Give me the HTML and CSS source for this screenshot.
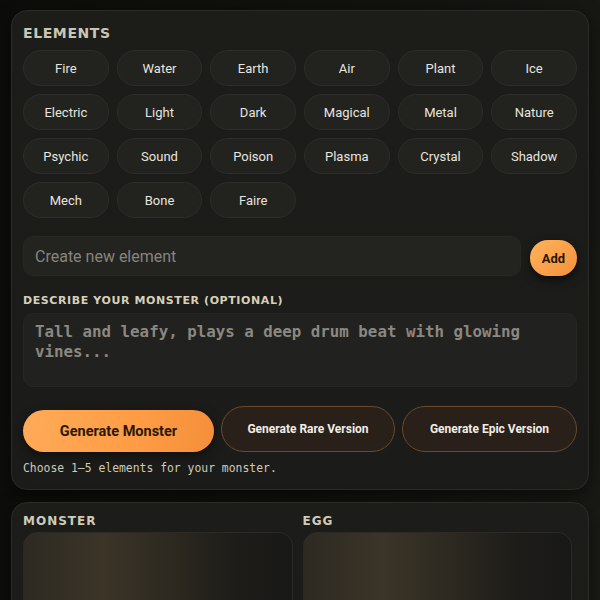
FILE: index.html
```html
<!DOCTYPE html>
<html lang="en">
<head>
    <meta charset="utf-8">
    <title>Monster Maker</title>
    <link rel="stylesheet" href="styles.css">
</head>
<body>
    <section class="card builder">
        <h2 class="title">ELEMENTS</h2>
        <div class="chips">
            <button class="chip">Fire</button>
            <button class="chip">Water</button>
            <button class="chip">Earth</button>
            <button class="chip">Air</button>
            <button class="chip">Plant</button>
            <button class="chip">Ice</button>
            <button class="chip">Electric</button>
            <button class="chip">Light</button>
            <button class="chip">Dark</button>
            <button class="chip">Magical</button>
            <button class="chip">Metal</button>
            <button class="chip">Nature</button>
            <button class="chip">Psychic</button>
            <button class="chip">Sound</button>
            <button class="chip">Poison</button>
            <button class="chip">Plasma</button>
            <button class="chip">Crystal</button>
            <button class="chip">Shadow</button>
            <button class="chip">Mech</button>
            <button class="chip">Bone</button>
            <button class="chip">Faire</button>
        </div>

        <div class="new-element">
            <input class="field" placeholder="Create new element">
            <button class="btn-add">Add</button>
        </div>

        <label class="label">DESCRIBE YOUR MONSTER (OPTIONAL)</label>
        <textarea class="desc" placeholder="Tall and leafy, plays a deep drum beat with glowing vines..."></textarea>

        <div class="actions">
            <button class="btn-main">Generate Monster</button>
            <button class="btn-alt">Generate Rare Version</button>
            <button class="btn-alt">Generate Epic Version</button>
        </div>
        <p class="hint">Choose 1–5 elements for your monster.</p>
    </section>

    <section class="card results">
        <div class="result">
            <h3 class="label-sm">MONSTER</h3>
            <div class="frame"></div>
        </div>
        <div class="result">
            <h3 class="label-sm">EGG</h3>
            <div class="frame"></div>
        </div>
    </section>
</body>
</html>
```

FILE: styles.css
```css
body {
    margin: 0;
    padding: 10px 11px;
    min-height: 600px;
    box-sizing: border-box;
    background: linear-gradient(100deg, #0c0c0b 0%, #121210 60%, #1a1a16 100%);
    font-family: Roboto, "Liberation Sans", sans-serif;
    color: #e6e3dc;
}

.card {
    background: linear-gradient(180deg, #1c1c19 0%, #1b1b19 100%);
    border: 1px solid #2b2b27;
    border-radius: 16px;
    box-shadow: 0 6px 18px rgba(0, 0, 0, 0.5);
}

.builder {
    padding: 12px 11px 14px 11px;
    margin-bottom: 12px;
}

.title {
    margin: 2px 0 9px 0;
    font-family: "DejaVu Sans", sans-serif;
    font-size: 14px;
    font-weight: bold;
    letter-spacing: 0.6px;
    color: #cbc6b3;
}

.chips {
    display: grid;
    grid-template-columns: repeat(6, 1fr);
    gap: 8px;
}

.chip {
    height: 36px;
    border-radius: 18px;
    border: 1px solid #2c2c28;
    background: #22221f;
    color: #e7e5df;
    font-family: Roboto, sans-serif;
    font-size: 13px;
}

.new-element {
    display: flex;
    align-items: center;
    gap: 9px;
    margin-top: 18px;
}

.field {
    flex: 1;
    height: 40px;
    box-sizing: border-box;
    padding: 0 11px;
    border-radius: 10px;
    border: 1px solid #262623;
    background: #232320;
    color: #e6e3dc;
    font-family: Roboto, sans-serif;
    font-size: 16px;
    outline: none;
}
.field::placeholder {
    color: #87857e;
}

.btn-add {
    width: 47px;
    height: 36px;
    margin-top: 4px;
    border: none;
    border-radius: 18px;
    background: linear-gradient(135deg, #ffb35c, #f5913a);
    color: #2a1606;
    font-family: Roboto, sans-serif;
    font-size: 13px;
    font-weight: bold;
    box-shadow: 0 4px 10px rgba(0, 0, 0, 0.55);
}

.label {
    display: block;
    margin: 18px 0 6px 0;
    font-family: "DejaVu Sans", sans-serif;
    font-size: 11px;
    font-weight: bold;
    letter-spacing: 0.6px;
    color: #d6d0bb;
}

.desc {
    display: block;
    width: 100%;
    height: 74px;
    box-sizing: border-box;
    padding: 8px 11px;
    border-radius: 10px;
    border: 1px solid #262623;
    background: #21211f;
    color: #e6e3dc;
    font-family: "DejaVu Sans Mono", monospace;
    font-size: 15.8px;
    font-weight: bold;
    line-height: 20px;
    resize: none;
    outline: none;
}
.desc::placeholder {
    color: #8b8881;
}

.actions {
    display: grid;
    grid-template-columns: 191fr 174fr 175fr;
    align-items: end;
    gap: 7px;
    margin-top: 19px;
}

.btn-main {
    height: 42px;
    border: none;
    border-radius: 21px;
    background: linear-gradient(100deg, #ffab58 0%, #ff9c45 60%, #f48e3a 100%);
    color: #2b1708;
    font-family: Roboto, sans-serif;
    font-size: 14.5px;
    font-weight: bold;
    box-shadow: 0 4px 12px rgba(0, 0, 0, 0.45);
}

.btn-alt {
    height: 46px;
    border: 1px solid #6a4a2c;
    border-radius: 23px;
    background: #29201a;
    color: #f1ede6;
    font-family: Roboto, sans-serif;
    font-size: 12px;
    font-weight: bold;
}

.hint {
    margin: 9px 0 0 0;
    font-family: "DejaVu Sans Mono", monospace;
    font-size: 11.4px;
    color: #cfcab9;
}

.results {
    display: grid;
    grid-template-columns: 1fr 1fr;
    gap: 10px;
    padding: 11px 16px 0 11px;
    height: 120px;
    border-bottom-left-radius: 0;
    border-bottom-right-radius: 0;
}

.label-sm {
    margin: 0 0 4px 0;
    font-family: "DejaVu Sans", sans-serif;
    font-size: 12px;
    font-weight: bold;
    letter-spacing: 1px;
    color: #d0cbb9;
}

.frame {
    height: 100px;
    border: 1px solid #2a2a26;
    border-radius: 14px;
    background: linear-gradient(90deg, #2e2a22 0%, #3b3427 30%, #2d2920 55%, #1d1c19 80%, #181816 100%);
}
```
